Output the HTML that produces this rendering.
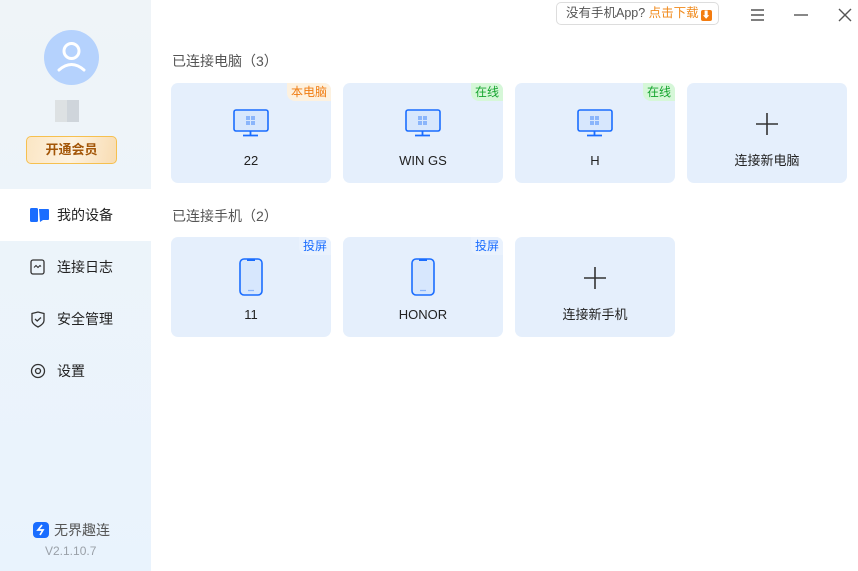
<!DOCTYPE html>
<html><head><meta charset="utf-8"><style>
*{margin:0;padding:0;box-sizing:border-box}
body{width:858px;height:571px;overflow:hidden;background:#fff;font-family:"Liberation Sans","Noto Sans CJK SC",sans-serif;position:relative}
.side{position:absolute;left:0;top:0;width:151px;height:571px;background:linear-gradient(#eff4f8,#e9f3fd)}
.av{position:absolute;left:44px;top:30px;width:55px;height:55px;border-radius:50%;background:#b5d2fd}
.nm{position:absolute;left:55px;top:100px;width:24px;height:22px;background:linear-gradient(90deg,#dde1e3 50%,#cfd5db 50%)}
.vip{position:absolute;left:26px;top:136px;width:91px;height:28px;border:1px solid #f6c04f;border-radius:5px;background:linear-gradient(100deg,#fbe6c4,#fdf2e0 50%,#f8dcb2);color:#a35608;font-size:13px;font-weight:bold;text-align:center;line-height:26px}
.nav{position:absolute;left:0;width:151px;height:52px;font-size:14px;color:#222;line-height:52px;padding-left:57px}
.nav.act{background:#fff}
.nav svg{position:absolute;left:30px;top:18px}
.logo{position:absolute;left:33px;top:520px;font-size:14px;color:#555;display:flex;align-items:center;gap:5px}
.ver{position:absolute;left:45px;top:544px;font-size:12px;color:#9aa0a8}
.h{position:absolute;left:172px;font-size:14px;color:#555}
.card{position:absolute;width:160px;height:100px;background:#e5effc;border-radius:7px;overflow:hidden}
.card .t{position:absolute;top:70px;width:100%;text-align:center;font-size:13px;color:#222;line-height:16px;height:16px}
.tag{position:absolute;right:0;top:0;font-size:12px;padding:1px 4px;border-bottom-left-radius:8px;line-height:16px;height:18px}
.ic{position:absolute;left:50%;transform:translateX(-50%)}
.top{position:absolute;left:556px;top:2px;width:163px;height:23px;border:1px solid #ddd;border-radius:5px;font-size:12.5px;color:#555;line-height:21px;padding-left:9px}
</style></head><body>
<div class="side">
<div class="av"><svg width="55" height="55" viewBox="0 0 55 55"><circle cx="27.5" cy="21" r="7.5" fill="none" stroke="#fff" stroke-width="3"/><path d="M15 40 Q27.5 29 40 40" fill="none" stroke="#fff" stroke-width="3" stroke-linecap="round"/></svg></div>
<div class="nm"></div>
<div class="vip">开通会员</div>
<div class="nav act" style="top:189px"><svg width="20" height="16"><rect x="0" y="1" width="8" height="14" rx="1.5" fill="#1a6dff"/><path d="M9 2h9a1 1 0 0 1 1 1v9a1 1 0 0 1-1 1h-5l-3 2z" fill="#1a6dff"/></svg>我的设备</div>
<div class="nav" style="top:241px"><svg width="16" height="16"><rect x="1" y="1" width="13" height="14" rx="2" fill="none" stroke="#333" stroke-width="1.3"/><path d="M4 8.5l2-2 2 2 2-2 1 1" fill="none" stroke="#333" stroke-width="1.1"/></svg>连接日志</div>
<div class="nav" style="top:293px"><svg width="16" height="17"><path d="M2 2.5L8 1l6 1.5v7c0 3-3 5-6 6.5-3-1.5-6-3.5-6-6.5z" fill="none" stroke="#333" stroke-width="1.3"/><path d="M5 8l2.2 2L11 6.5" fill="none" stroke="#333" stroke-width="1.2"/></svg>安全管理</div>
<div class="nav" style="top:345px"><svg width="16" height="16"><circle cx="8" cy="8" r="6.5" fill="none" stroke="#333" stroke-width="1.3"/><circle cx="8" cy="8" r="2.5" fill="none" stroke="#333" stroke-width="1.3"/></svg>设置</div>
<div class="logo"><svg width="16" height="16"><rect width="16" height="16" rx="4" fill="#1a6dff"/><path d="M9 3L5 8h5l-3 5" fill="none" stroke="#fff" stroke-width="1.7"/></svg>无界趣连</div>
<div class="ver">V2.1.10.7</div>
</div>
<div class="top">没有手机App? <span style="color:#f08a1c">点击下载</span><span style="display:inline-block;width:11px;height:11px;background:#f37c10;border-radius:2px;vertical-align:-1px;margin-left:2px;color:#fff;font-size:9px;line-height:11px;text-align:center">⬇</span></div>
<svg style="position:absolute;left:750px;top:8px" width="15" height="14"><path d="M1 2h13M1 7h13M1 12h13" stroke="#555" stroke-width="1.4"/></svg>
<svg style="position:absolute;left:794px;top:8px" width="14" height="14"><path d="M0 7h14" stroke="#555" stroke-width="1.4"/></svg>
<svg style="position:absolute;left:838px;top:8px" width="14" height="14"><path d="M1 1l12 12M13 1L1 13" stroke="#555" stroke-width="1.4"/></svg>
<div class="h" style="top:51px">已连接电脑（3）</div>
<div class="h" style="top:206px">已连接手机（2）</div>

<div class="card" style="left:171px;top:83px"><div class="tag" style="background:#fdf1df;color:#f07c10">本电脑</div>
<svg class="ic" style="top:26px" width="36" height="28"><rect x="1" y="1" width="34" height="21" rx="2" fill="#d7e7fd" stroke="#1a6dff" stroke-width="1.6"/><rect x="13" y="7" width="4" height="4" fill="#8ab5fb"/><rect x="18" y="7" width="4" height="4" fill="#8ab5fb"/><rect x="13" y="12" width="4" height="4" fill="#8ab5fb"/><rect x="18" y="12" width="4" height="4" fill="#8ab5fb"/><path d="M17.5 22v4M10 26.5h15" stroke="#1a6dff" stroke-width="1.8"/></svg><div class="t">22</div></div>
<div class="card" style="left:343px;top:83px"><div class="tag" style="background:#d6f7d8;color:#16a52e">在线</div>
<svg class="ic" style="top:26px" width="36" height="28"><rect x="1" y="1" width="34" height="21" rx="2" fill="#d7e7fd" stroke="#1a6dff" stroke-width="1.6"/><rect x="13" y="7" width="4" height="4" fill="#8ab5fb"/><rect x="18" y="7" width="4" height="4" fill="#8ab5fb"/><rect x="13" y="12" width="4" height="4" fill="#8ab5fb"/><rect x="18" y="12" width="4" height="4" fill="#8ab5fb"/><path d="M17.5 22v4M10 26.5h15" stroke="#1a6dff" stroke-width="1.8"/></svg><div class="t">WIN GS</div></div>
<div class="card" style="left:515px;top:83px"><div class="tag" style="background:#d6f7d8;color:#16a52e">在线</div>
<svg class="ic" style="top:26px" width="36" height="28"><rect x="1" y="1" width="34" height="21" rx="2" fill="#d7e7fd" stroke="#1a6dff" stroke-width="1.6"/><rect x="13" y="7" width="4" height="4" fill="#8ab5fb"/><rect x="18" y="7" width="4" height="4" fill="#8ab5fb"/><rect x="13" y="12" width="4" height="4" fill="#8ab5fb"/><rect x="18" y="12" width="4" height="4" fill="#8ab5fb"/><path d="M17.5 22v4M10 26.5h15" stroke="#1a6dff" stroke-width="1.8"/></svg><div class="t">H</div></div>
<div class="card" style="left:687px;top:83px"><svg class="ic" style="top:30px" width="22" height="22"><path d="M11 0v22M0 11h22" stroke="#333" stroke-width="1.6"/></svg><div class="t">连接新电脑</div></div>

<div class="card" style="left:171px;top:237px"><div class="tag" style="background:#eaf2fd;color:#1a6dff">投屏</div>
<svg class="ic" style="top:21px" width="24" height="38"><rect x="1" y="1" width="22" height="36" rx="4" fill="#d7e7fd" stroke="#1a6dff" stroke-width="1.6"/><path d="M8 2h8" stroke="#1a6dff" stroke-width="2"/><path d="M9 32.5h6" stroke="#8ab5fb" stroke-width="1.2"/></svg><div class="t">11</div></div>
<div class="card" style="left:343px;top:237px"><div class="tag" style="background:#eaf2fd;color:#1a6dff">投屏</div>
<svg class="ic" style="top:21px" width="24" height="38"><rect x="1" y="1" width="22" height="36" rx="4" fill="#d7e7fd" stroke="#1a6dff" stroke-width="1.6"/><path d="M8 2h8" stroke="#1a6dff" stroke-width="2"/><path d="M9 32.5h6" stroke="#8ab5fb" stroke-width="1.2"/></svg><div class="t">HONOR</div></div>
<div class="card" style="left:515px;top:237px"><svg class="ic" style="top:30px" width="22" height="22"><path d="M11 0v22M0 11h22" stroke="#333" stroke-width="1.6"/></svg><div class="t">连接新手机</div></div>
</body></html>
